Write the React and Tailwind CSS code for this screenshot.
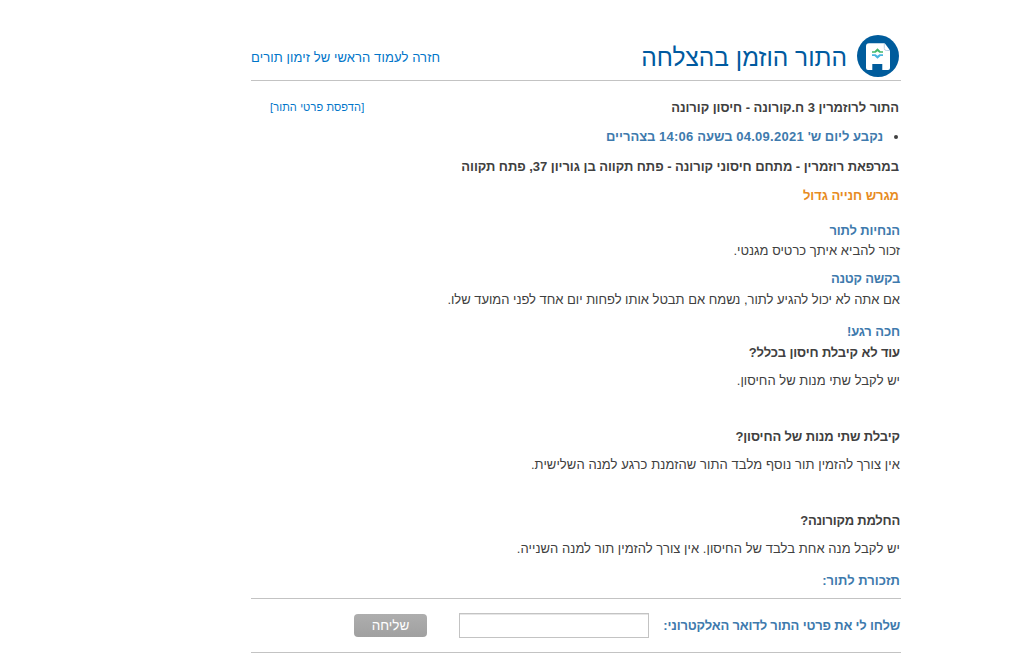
function ClinicIcon() {
  return (
    <svg className="h-[42px] w-[42px] shrink-0" viewBox="0 0 42 42">
      <circle cx="21" cy="21" r="21" fill="#005c9c" />
      <path d="M12 8.300h14.500c1 0 1.500.4 2 1l3.500 4.700c.6.700 1 1.500 1 2.500v16.500a2 2 0 0 1-2 2h-5.700V29h-10v6H11a2 2 0 0 1-2-2V11.300a3 3 0 0 1 3-3z" fill="#fff" />
      <path d="M27.300 9v4.500a2 2 0 0 0 2 2h3" fill="none" stroke="#a9c7de" strokeWidth="0.800" />
      <path d="M15 17.800v-1.600h2.500l3-2.900 3 2.900H26v1.600h-3.600l-1.900-1.500-1.900 1.500z" fill="#45b96b" />
      <path d="M15 19.300v1.600h2.500l3 2.900 3-2.900H26v-1.600h-3.600l-1.900 1.500-1.900-1.500z" fill="#48b4e0" />
    </svg>
  );
}

export default function App() {
  return (
    <div
      dir="rtl"
      className="flex h-[662px] w-[1018px] justify-start bg-white pr-[117px] font-['Liberation_Sans',Arial,sans-serif] text-[13px] leading-5 text-[#404040]"
    >
      <main className="flex w-[650px] flex-col pt-[35px]">
        <header className="flex h-[46px] items-start border-b border-[#c3c3c3] pr-[2px]">
          <ClinicIcon />
          <h1 className="mr-[10px] mt-[7px] whitespace-nowrap text-[24.500px] leading-8 text-[#005aa0]">התור הוזמן בהצלחה</h1>
          <a className="mr-auto mt-[13px] whitespace-nowrap tracking-[0.1px] text-[#0075c9]">חזרה לעמוד הראשי של זימון תורים</a>
        </header>

        <section className="flex flex-col whitespace-nowrap pr-[2px] pt-[17px] font-bold">
          <div className="flex justify-between">
            <h2 className="tracking-[-0.05px]">התור לרוזמרין 3 ח.קורונה - חיסון קורונה</h2>
            <a className="-mt-px ml-[19px] text-[11px] font-normal tracking-[0.12px] text-[#0075c9]">[הדפסת פרטי התור]</a>
          </div>
          <div className="mt-[9px] flex items-center">
            <span className="mr-px h-1 w-1 rounded-full bg-[#404040]" />
            <p className="mr-[11px] text-[#3e7aad]">
              נקבע ליום ש' <span className="tracking-[0.28px]">04.09.2021</span> בשעה <span className="tracking-[0.25px]">14:06</span> בצהריים
            </p>
          </div>
          <p className="mt-[10px] tracking-[-0.04px]">במרפאת רוזמרין - מתחם חיסוני קורונה - פתח תקווה בן גוריון 37, פתח תקווה</p>
          <p className="mt-[9px] tracking-[-0.07px] text-[#e78b22]">מגרש חנייה גדול</p>
        </section>

        <section className="flex flex-col whitespace-nowrap pr-px pt-[15px]">
          <h3 className="font-bold tracking-[-0.15px] text-[#3e7aad]">הנחיות לתור</h3>
          <p className="tracking-[0.03px]">זכור להביא איתך כרטיס מגנטי.</p>
          <h3 className="mt-2 font-bold tracking-[-0.25px] text-[#3e7aad]">בקשה קטנה</h3>
          <p className="mt-px tracking-[-0.02px]">אם אתה לא יכול להגיע לתור, נשמח אם תבטל אותו לפחות יום אחד לפני המועד שלו.</p>
          <h3 className="mt-3 font-bold tracking-[-0.1px] text-[#3e7aad]">חכה רגע!</h3>
          <h4 className="mt-px font-bold tracking-[-0.14px]">עוד לא קיבלת חיסון בכלל?</h4>
          <p className="mt-2">יש לקבל שתי מנות של החיסון.</p>
          <h4 className="mt-9 font-bold tracking-[-0.12px]">קיבלת שתי מנות של החיסון?</h4>
          <p className="mt-2 tracking-[0.08px]">אין צורך להזמין תור נוסף מלבד התור שהזמנת כרגע למנה השלישית.</p>
          <h4 className="mt-9 font-bold tracking-[-0.22px]">החלמת מקורונה?</h4>
          <p className="mt-2 tracking-[0.05px]">יש לקבל מנה אחת בלבד של החיסון. אין צורך להזמין תור למנה השנייה.</p>
          <h3 className="mt-3 font-bold tracking-[0.05px] text-[#3e7aad]">תזכורת לתור:</h3>
        </section>

        <form className="mt-[7px] flex h-[55px] items-start border-y border-[#c3c3c3] pr-px">
          <label htmlFor="email" className="mt-[17px] w-[251px] whitespace-nowrap font-bold tracking-[-0.17px] text-[#3e7aad]">
            שלחו לי את פרטי התור לדואר האלקטרוני:
          </label>
          <input id="email" className="mt-[14px] h-[25px] w-[190px] border border-[#c3c3c3] bg-white px-1 shadow-[inset_0_1px_0_#e6e6e6]" />
          <button type="button" className="mr-8 mt-[15px] h-[23px] w-[73px] rounded-[4px] bg-linear-to-b from-[#aeaeae] to-[#a0a0a0] pb-px text-[13.500px] leading-[21px] text-white">
            שליחה
          </button>
        </form>
      </main>
    </div>
  );
}
